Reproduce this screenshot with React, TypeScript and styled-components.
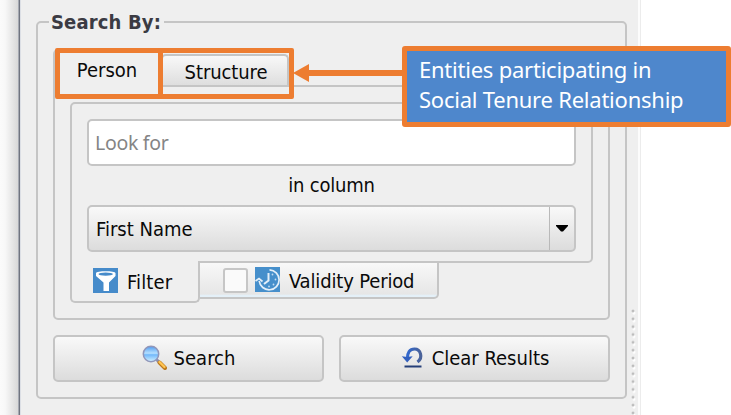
import React from 'react';
import styled, { createGlobalStyle } from 'styled-components';

const line = '#c5c5c5';
const orange = '#ed7d31';
const face = '#efefef';

const Global = createGlobalStyle`
  *, *::before, *::after { box-sizing: border-box; }
  body { margin: 0; background: #fff; overflow: hidden; }
`;

const Screen = styled.div`
  position: relative;
  display: flex;
  width: 731px;
  height: 415px;
  overflow: hidden;
  background: #fff;
  color: #0a0a0a;
  font: 20px/24px 'DejaVu Sans Condensed', 'DejaVu Sans', sans-serif;
  font-stretch: condensed;
`;

const WindowEdge = styled.div`
  flex: none;
  width: 21px;
  background: linear-gradient(90deg, #fbfbfb 0, #f8f8f8 5px, #d8d8d8 18px, #a5a9b2 18px, #a5a9b2 19px, #70747f 19px, #70747f 20px, #dcdfe5 20px);
`;

const Dock = styled.main`
  flex: none;
  width: 617px;
  height: 415px;
  padding: 11px 0 0 15px;
  background: ${face};
`;

const SplitEdge = styled.div`
  flex: none;
  width: 3px;
  background: linear-gradient(90deg, #fcfcfc 2px, #ececec 2px);
`;

const Group = styled.fieldset`
  width: 591px;
  height: 388px;
  min-width: 0;
  margin: 0;
  padding: 16px 15px 0 15px;
  border: 2px solid ${line};
  border-radius: 5px;
`;

const Title = styled.legend`
  height: 22px;
  margin-left: -4px;
  padding: 0 3px 0 2px;
  color: #3b3b43;
  font-weight: bold;
  line-height: 22px;
  white-space: nowrap;
`;

const Text = styled.span<{ $spacing?: number; $drop?: number; $color?: string }>`
  display: block;
  white-space: nowrap;
  letter-spacing: ${p => p.$spacing ?? 0}px;
  padding-top: ${p => p.$drop ?? 0}px;
  color: ${p => p.$color ?? 'inherit'};
`;

const EntityTabs = styled.div`
  display: flex;
  align-items: flex-end;
  height: 36px;
`;

const EntityTab = styled.div<{ $active?: boolean }>`
  display: flex;
  flex: none;
  justify-content: center;
  width: ${p => (p.$active ? 108 : 128)}px;
  height: ${p => (p.$active ? 38 : 31)}px;
  margin-bottom: ${p => (p.$active ? -2 : 0)}px;
  padding: ${p => (p.$active ? '7px 0 0' : '4px 0 0 2px')};
  border: 2px solid ${line};
  border-bottom: 0;
  border-radius: 5px 5px 0 0;
  background: ${p => (p.$active ? face : 'linear-gradient(#f8f8f8, #dedede)')};
`;

const EntityPane = styled.div`
  height: 235px;
  padding: 15px 15px 0;
  border: 2px solid ${line};
  border-radius: 0 5px 5px 5px;
`;

const FilterPane = styled.div`
  display: flex;
  flex-direction: column;
  height: 161px;
  padding: 15px 15px 0 15px;
  border: 2px solid ${line};
  border-radius: 5px 5px 5px 0;
`;

const SearchInput = styled.div`
  height: 47px;
  padding: 10px 0 0 6px;
  border: 2px solid ${line};
  border-radius: 5px;
  background: #fff;
  font-family: 'Noto Sans', sans-serif;
  font-size: 19.5px;
  font-stretch: normal;
`;

const ColumnCaption = styled.div`
  display: flex;
  justify-content: center;
  height: 39px;
  padding-top: 7px;
`;

const Combo = styled.div`
  display: flex;
  align-items: stretch;
  justify-content: space-between;
  height: 47px;
  border: 2px solid ${line};
  border-radius: 5px;
  background: linear-gradient(#f9f9f9, #dcdcdc);
`;

const ComboValue = styled.div`
  padding: 10px 0 0 7px;
`;

const ComboArrow = styled.div`
  display: flex;
  align-items: center;
  justify-content: center;
  width: 25px;
  border-left: 1px solid #b9b9b9;
`;

const FilterTabs = styled.div`
  display: flex;
  align-items: flex-start;
  margin-top: -2px;
`;

const FilterTab = styled.div`
  display: flex;
  flex: none;
  width: 130px;
  height: 42px;
  padding: 7px 0 0 21px;
  gap: 9px;
  border: solid ${line};
  border-width: 0 2px 2px;
  border-radius: 0 0 5px 5px;
  background: ${face};
`;

const ValidityTab = styled.div`
  display: flex;
  flex: none;
  width: 239px;
  height: 38px;
  padding: 4px 0 0 23px;
  border: solid ${line};
  border-width: 2px 2px 2px 0;
  border-radius: 0 0 5px 0;
  background: linear-gradient(#f8f8f8, #e6e6e6 92%, #e4f0f8 94%);
`;

const Checkbox = styled.div`
  width: 25px;
  height: 25px;
  margin: 1px 7px 0 0;
  border: 2px solid #c6c6c6;
  border-radius: 3px;
  background: #fafafa;
`;

const TabIcon = styled.svg`
  flex: none;
  display: block;
  width: 25px;
  height: 25px;
`;

const ValidityLabel = styled.div`
  margin-left: 9px;
`;

const Actions = styled.div`
  display: flex;
  gap: 15px;
  margin-top: 15px;
`;

const Action = styled.button`
  display: flex;
  justify-content: center;
  align-items: flex-start;
  gap: 7px;
  flex: 1;
  height: 47px;
  padding: 8px 0 0;
  border: 2px solid ${line};
  border-radius: 5px;
  background: linear-gradient(#f9f9f9, #dcdcdc);
  color: inherit;
  font: inherit;
`;

const Grip = styled.div`
  position: absolute;
  left: 631px;
  top: 309px;
  width: 5px;
  height: 106px;
  background:
    radial-gradient(circle at 2px 2px, #bdbdbd 0 1px, transparent 1.8px) 0 0 / 5px 7.85px,
    radial-gradient(circle at 3px 4px, #fff 0 1.2px, transparent 1.8px) 0 0 / 5px 7.85px;
`;

const Highlight = styled.div<{ $x: number; $w: number }>`
  position: absolute;
  left: ${p => p.$x}px;
  top: 48px;
  width: ${p => p.$w}px;
  height: 51px;
  border: 5px solid ${orange};
  border-radius: 2px;
`;

const Pointer = styled.svg`
  position: absolute;
  left: 293px;
  top: 64px;
  width: 111px;
  height: 18px;
`;

const Callout = styled.aside`
  position: absolute;
  left: 402px;
  top: 46px;
  width: 329px;
  height: 81px;
  padding: 3px 0 0 12px;
  border: 5px solid ${orange};
  border-radius: 3px;
  background: #4e87cc;
  color: #fff;
  font: 22px/30px 'Noto Sans', sans-serif;
`;

const FunnelIcon = () => (
  <TabIcon viewBox="0 0 25 25">
    <rect width="25" height="25" fill="#468bca" />
    <path d="M3 5.2C3 2.6 22.500 2.600 22.500 5.200V8L16 14.500V23H10.500V14.500L3 8Z" fill="#fff" />
    <ellipse cx="12.700" cy="6.100" rx="7.200" ry="1.700" fill="#468bca" />
  </TabIcon>
);

const ClockIcon = () => (
  <TabIcon viewBox="0 0 25 25">
    <rect width="25" height="25" fill="#468fcb" />
    <g fill="none" stroke="#e3eff9" strokeWidth="1.700">
      <path d="M14.500 2.800A10 10 0 1 1 4.200 14" />
      <path d="M13.500 6V13.500L9 17" strokeWidth="2" />
      <path d="M.5 14L4 11.500L7.500 14.500" />
    </g>
    <g fill="#c3ddf1">
      <circle cx="17.500" cy="7.500" r=".9" />
      <circle cx="20.500" cy="12.500" r=".9" />
      <circle cx="18.500" cy="17.500" r=".9" />
      <circle cx="14" cy="19.500" r=".9" />
    </g>
  </TabIcon>
);

const LensIcon = () => (
  <TabIcon viewBox="0 0 25 25">
    <defs>
      <linearGradient id="lens" x1="0" y1="0" x2="0" y2="1">
        <stop offset="0" stopColor="#4f9bf0" />
        <stop offset=".45" stopColor="#b6e0ff" />
        <stop offset=".55" stopColor="#72b8fa" />
        <stop offset="1" stopColor="#d4f3ff" />
      </linearGradient>
    </defs>
    <path d="M14 14L17.500 17.500" stroke="#8c8fae" strokeWidth="3" />
    <path d="M17.500 17.500L23 23" stroke="#bc781c" strokeWidth="4" strokeLinecap="round" />
    <path d="M17.500 17L22.500 22" stroke="#ffc553" strokeWidth="2.400" strokeLinecap="round" />
    <circle cx="9" cy="9" r="7.700" fill="url(#lens)" stroke="#9196b9" strokeWidth="1.500" />
  </TabIcon>
);

const UndoIcon = () => (
  <TabIcon viewBox="0 0 25 25">
    <defs>
      <linearGradient id="undo" x1="0" x2="1">
        <stop offset="0" stopColor="#3268cd" />
        <stop offset="1" stopColor="#4a6299" />
      </linearGradient>
    </defs>
    <path d="M17.500 17C23.500 12.500 20.500 4 14.500 4C9.500 4 7.500 8 7.500 13" fill="none" stroke="url(#undo)" strokeWidth="3.200" />
    <path d="M1.800 11.200L7.300 12L12.700 11.200L7.200 17.500Z" fill="#315fbe" />
    <path d="M4.500 21.500H21.500" stroke="#243e78" strokeWidth="2" />
  </TabIcon>
);

export default function App() {
  return (
    <>
      <Global />
      <Screen>
        <WindowEdge />
        <Dock>
          <Group>
            <Title><Text $spacing={0.15}>Search By:</Text></Title>
            <EntityTabs>
              <EntityTab $active><Text>Person</Text></EntityTab>
              <EntityTab><Text $spacing={-0.1}>Structure</Text></EntityTab>
            </EntityTabs>
            <EntityPane>
              <FilterPane>
                <SearchInput><Text $spacing={-0.3} $color="#858585">Look for</Text></SearchInput>
                <ColumnCaption><Text $spacing={-0.2}>in column</Text></ColumnCaption>
                <Combo>
                  <ComboValue><Text>First Name</Text></ComboValue>
                  <ComboArrow>
                    <svg width="12" height="7" viewBox="0 0 12 7"><path d="M0 0H12V1L7 6.500H5L0 1Z" fill="#000" /></svg>
                  </ComboArrow>
                </Combo>
              </FilterPane>
              <FilterTabs>
                <FilterTab><FunnelIcon /><Text $drop={2} $spacing={0.15}>Filter</Text></FilterTab>
                <ValidityTab>
                  <Checkbox />
                  <ClockIcon />
                  <ValidityLabel><Text $drop={2} $spacing={-0.15}>Validity Period</Text></ValidityLabel>
                </ValidityTab>
              </FilterTabs>
            </EntityPane>
            <Actions>
              <Action><LensIcon /><Text $drop={1}>Search</Text></Action>
              <Action><UndoIcon /><Text $drop={1}>Clear Results</Text></Action>
            </Actions>
          </Group>
        </Dock>
        <SplitEdge />
        <Grip />
        <Highlight $x={55} $w={108} />
        <Highlight $x={158} $w={136} />
        <Pointer viewBox="0 0 111 18">
          <path d="M0 9L16 0V6H111V12H16V18Z" fill={orange} />
        </Pointer>
        <Callout>
          <Text $spacing={-0.23}>Entities participating in</Text>
          <Text $spacing={-0.23}>Social Tenure Relationship</Text>
        </Callout>
      </Screen>
    </>
  );
}
